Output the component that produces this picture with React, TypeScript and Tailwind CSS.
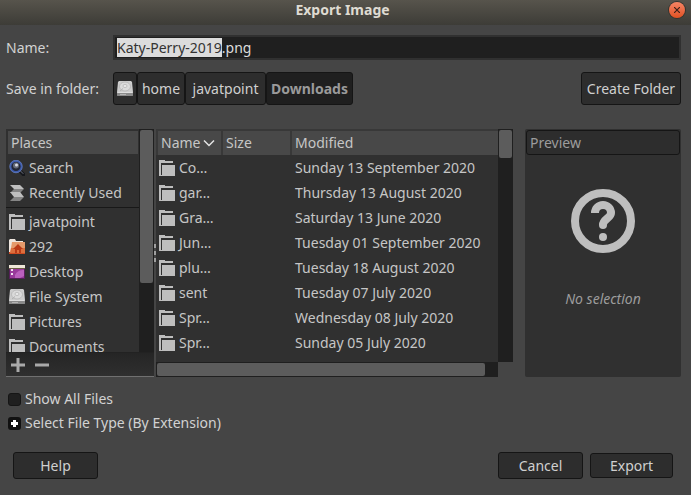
import { useEffect, useRef, useState } from "react";
import type { ReactNode } from "react";

const FILE_NAME = "Katy-Perry-2019.png";

function FolderIcon() {
  return (
    <svg width="16" height="16" viewBox="0 0 16 16" className="shrink-0" shapeRendering="crispEdges" aria-hidden="true">
      <path d="M0 0h6v1h8v2H2v12h14v1H0z" fill="#bebebe" />
      <path d="M3 5h13v11H3z" fill="#bebebe" />
    </svg>
  );
}

function DriveIcon() {
  return (
    <svg width="16" height="16" viewBox="0 0 16 16" className="shrink-0" aria-hidden="true">
      <path d="M2 0h12l1 1 1 10v3l-1 1H1l-1-1v-3L1 1z" fill="#cdcdcd" />
      <path d="M0 12h16v2l-1 1H1l-1-1z" fill="#8a8a8a" />
      <path d="M1 11h14v1H1z" fill="#dedede" />
      <ellipse cx="8" cy="5.500" rx="5.500" ry="4.500" fill="#dadada" stroke="#b2b2b2" strokeWidth="0.8" />
      <ellipse cx="8" cy="5" rx="2" ry="1.600" fill="#e8e8e8" stroke="#b0b0b0" strokeWidth="0.7" />
      <path d="M3 10l3-2.500" stroke="#b0b0b0" />
      <path d="M3 13.500h6" stroke="#b4b4b4" />
    </svg>
  );
}

function SearchIcon() {
  return (
    <svg width="16" height="16" viewBox="0 0 16 16" className="shrink-0" aria-hidden="true">
      <path d="M11 11l3.500 3.500" stroke="#15171c" strokeWidth="3.500" strokeLinecap="round" />
      <path d="M11.500 11l2.500 2.500" stroke="#6f7480" strokeWidth="1" strokeLinecap="round" />
      <circle cx="7" cy="6.500" r="5.500" fill="#232735" stroke="#3d5bac" strokeWidth="1.800" />
      <circle cx="7" cy="6.500" r="6.300" fill="none" stroke="#7189c8" strokeWidth="0.600" />
      <circle cx="7" cy="5.500" r="3" fill="#656a78" />
      <circle cx="7.500" cy="5" r="1.500" fill="#d8dbe4" />
    </svg>
  );
}

function RecentIcon() {
  return (
    <svg width="16" height="16" viewBox="0 0 16 16" className="shrink-0" aria-hidden="true">
      <path d="M1 0h10l4 4H5z" fill="#bfbfbf" />
      <path d="M5 4h10l-4 4H1z" fill="#858585" />
      <path d="M1 7h10l4 5H5z" fill="#bfbfbf" />
      <path d="M5 12h10l-4 4H1z" fill="#858585" />
    </svg>
  );
}

function HomeFolderIcon() {
  return (
    <svg width="16" height="16" viewBox="0 0 16 16" className="shrink-0" aria-hidden="true">
      <path d="M0 1h6l1 2h8v12H0z" fill="#c4431f" />
      <path d="M1 0h5l1 2h7v3H3v8H0V1z" fill="#eee6df" />
      <path d="M3 3h13v11l-1 1H1z" fill="#e59a6b" />
      <path d="M2 9h14v5H1z" fill="#dc6f3d" />
      <path d="M9 5l5 5h-2v4h-2v-3H8v3H6v-4H4z" fill="#b93a18" />
      <path d="M0 14h16v1H0z" fill="#cf4a20" />
    </svg>
  );
}

function DesktopIcon() {
  return (
    <svg width="16" height="14" viewBox="0 0 16 14" className="shrink-0" aria-hidden="true">
      <path d="M0 0h16v14H0z" fill="#57205a" />
      <path d="M0 0h16v3H0z" fill="#efe7d8" />
      <path d="M0 3h16v1H0z" fill="#6c5c43" />
      <path d="M1 4h14v9H1z" fill="#993a9b" />
      <path d="M6 10c2-4 5-5 9-5v6l-4 2H6z" fill="#bb60be" />
      <path d="M2 4h2v2H2zM2 8h2v2H2z" fill="#f0e4f1" />
    </svg>
  );
}

const places: { name: string; icon: ReactNode }[] = [
  { name: "javatpoint", icon: <FolderIcon /> },
  { name: "292", icon: <HomeFolderIcon /> },
  { name: "Desktop", icon: <DesktopIcon /> },
  { name: "File System", icon: <DriveIcon /> },
  { name: "Pictures", icon: <FolderIcon /> },
  { name: "Documents", icon: <FolderIcon /> },
];

const files = [
  ["Co…", "Sunday 13 September 2020"],
  ["gar…", "Thursday 13 August 2020"],
  ["Gra…", "Saturday 13 June 2020"],
  ["Jun…", "Tuesday 01 September 2020"],
  ["plu…", "Tuesday 18 August 2020"],
  ["sent", "Tuesday 07 July 2020"],
  ["Spr…", "Wednesday 08 July 2020"],
  ["Spr…", "Sunday 05 July 2020"],
];

const button = "rounded-[3px] border border-[#151515] bg-[#2d2d2d] text-[#d0d0d0]";

function Place({ name, icon }: { name: string; icon: ReactNode }) {
  return (
    <li>
      <button type="button" className="flex h-[25px] w-full items-center gap-1 pl-[3px] text-left">
        {icon}
        {name}
      </button>
    </li>
  );
}

export default function App() {
  const nameRef = useRef<HTMLInputElement>(null);
  const [name, setName] = useState(FILE_NAME);
  const [showAll, setShowAll] = useState(false);

  // Preselect the base name so typing keeps the extension.
  useEffect(() => {
    nameRef.current?.focus();
    nameRef.current?.setSelectionRange(0, FILE_NAME.lastIndexOf("."));
  }, []);

  return (
    <main className="flex min-h-screen flex-col bg-[#454545] font-['Noto_Sans',sans-serif] text-[14px] leading-5 text-[#c6c6c6]">
      <header className="grid h-[25px] grid-cols-[1fr_auto_1fr] items-center bg-linear-to-b from-[#57544c] to-[#3d3c37] pr-[6px] pb-[5px]">
        <h1 className="col-start-2 font-bold text-[#dfdbd2]">Export Image</h1>
        <button
          type="button"
          aria-label="Close"
          className="flex size-4 items-center justify-center justify-self-end rounded-full bg-linear-to-b from-[#f58464] to-[#e0501f] ring-1 ring-[#35332e]"
        >
          <svg width="6" height="6" viewBox="0 0 6 6" aria-hidden="true">
            <path d="M0 0l6 6M6 0L0 6" stroke="#3c2018" strokeWidth="1.2" />
          </svg>
        </button>
      </header>

      <div className="flex items-center pt-[10px] pr-[10px] pl-[6px]">
        <label htmlFor="file-name" className="w-[107px] shrink-0 text-[#d2d2d2]">
          Name:
        </label>
        <input
          id="file-name"
          ref={nameRef}
          value={name}
          onChange={(e) => setName(e.target.value)}
          spellCheck={false}
          className="h-[25px] min-w-0 flex-1 border-2 border-[#303030] bg-[#1f1f1f] px-[2px] text-[#dcdcdc] outline-none selection:bg-[#dcdcdc] selection:text-[#333333]"
        />
      </div>

      <div className="flex items-center pt-3 pr-[10px] pl-[6px] text-[#d2d2d2]">
        <span className="w-[107px] shrink-0">Save in folder:</span>
        <nav aria-label="Folder path" className="flex">
          <button type="button" aria-label="File System root" className={`${button} flex h-[33px] w-6 items-center justify-center`}>
            <DriveIcon />
          </button>
          <button type="button" className={`${button} h-[33px] w-12`}>home</button>
          <button type="button" className={`${button} h-[33px] w-[81px]`}>javatpoint</button>
          <button type="button" aria-current="page" className="h-[33px] w-[87px] rounded-[3px] border border-[#151515] bg-[#1f1f1f] font-bold text-[#9a9a9a]">
            Downloads
          </button>
        </nav>
        <button type="button" className={`${button} ml-auto h-[33px] w-[100px]`}>Create Folder</button>
      </div>

      <div className="flex h-[272px] pt-6 pr-[10px] pl-[6px]">
        <section aria-label="Places" className="flex w-[148px] shrink-0 flex-col border-b border-[#707070] bg-[#303030]">
          <div className="flex min-h-0 flex-1">
            <div className="min-w-0 flex-1 overflow-hidden">
              <h2 className="m-px mt-[2px] ml-[2px] h-[23px] bg-[#484848] pl-[3px] leading-6">Places</h2>
              <ul className="border-b border-[#181818] pb-[2px]">
                <Place name="Search" icon={<SearchIcon />} />
                <Place name="Recently Used" icon={<RecentIcon />} />
              </ul>
              <ul className="pt-px">
                {places.map((p) => (
                  <Place key={p.name} {...p} />
                ))}
              </ul>
            </div>
            <div className="w-[15px] bg-[#1f1f1f] p-px">
              <div className="h-[153px] rounded-[2px] bg-[#5c5c5c]" />
            </div>
          </div>
          <div className="flex h-6 items-center gap-[10px] border-t border-[#222222] bg-linear-to-b from-[#252525] to-[#2f2f2f] pl-[5px]">
            <button type="button" aria-label="Add bookmark">
              <svg width="14" height="14" viewBox="0 0 14 14" aria-hidden="true">
                <path d="M5.500 0h3v5.500H14v3H8.500V14h-3V8.500H0v-3h5.500z" fill="#a9a9a9" />
              </svg>
            </button>
            <button type="button" aria-label="Remove bookmark">
              <svg width="14" height="14" viewBox="0 0 14 14" aria-hidden="true">
                <path d="M0 5.500h14v3H0z" fill="#a9a9a9" />
              </svg>
            </button>
          </div>
        </section>

        <div className="flex w-[2px] shrink-0 flex-col justify-center gap-[3px]" role="separator" aria-orientation="vertical">
          <span className="h-1 bg-[#a0a0a0]" />
          <span className="h-1 bg-[#a0a0a0]" />
          <span className="h-1 bg-[#a0a0a0]" />
        </div>

        <section aria-label="Files" className="flex min-w-0 flex-1 flex-col">
          <div className="flex min-h-0 flex-1">
            <div className="min-w-0 flex-1 overflow-hidden bg-[#303030]">
              <table className="w-full table-fixed border-separate border-spacing-0 text-left">
                <thead>
                  <tr className="h-[26px]">
                    <th className="w-[67px] border-t-2 border-r-2 border-l-2 border-[#383838] bg-[#484848] pl-[3px] font-normal">
                      <button type="button" className="flex items-center gap-[2px]">
                        Name
                        <svg width="14" height="8" viewBox="0 0 14 8" fill="none" className="shrink-0" aria-hidden="true">
                          <path d="M2 1.500l5 5 5-5" stroke="#e4e4e4" strokeWidth="1.500" />
                        </svg>
                      </button>
                    </th>
                    <th className="w-[69px] border-t-2 border-r-2 border-[#383838] bg-[#484848] pl-[3px] font-normal">Size</th>
                    <th className="border-t-2 border-[#383838] bg-[#484848] pl-[3px] font-normal">Modified</th>
                  </tr>
                </thead>
                <tbody>
                  {files.map(([file, modified]) => (
                    <tr key={modified} className="h-[25px]">
                      <td className="pl-[3px]">
                        <span className="flex items-center gap-1 whitespace-nowrap">
                          <FolderIcon />
                          {file}
                        </span>
                      </td>
                      <td />
                      <td className="truncate pl-[3px]">{modified}</td>
                    </tr>
                  ))}
                </tbody>
              </table>
            </div>
            <div className="w-[15px] bg-[#1f1f1f] p-px">
              <div className="h-7 rounded-[2px] bg-[#5c5c5c]" />
            </div>
          </div>
          <div className="mr-[15px] h-[15px] bg-[#1f1f1f] p-px pr-[13px]">
            <div className="h-full rounded-[2px] bg-[#5c5c5c]" />
          </div>
        </section>

        <aside className="ml-3 flex w-[156px] shrink-0 flex-col items-center rounded-[2px] bg-[#303030] p-px text-[#9c9c9c]">
          <button type="button" className="h-[25px] w-full rounded-[3px] border border-[#151515] bg-[#2d2d2d] pl-[3px] text-left">
            Preview
          </button>
          <svg width="64" height="64" viewBox="0 0 64 64" className="mt-[34px]" fill="none" aria-hidden="true">
            <circle cx="32" cy="32" r="28" stroke="#bebebe" strokeWidth="8" />
            <path d="M24 24a8 8 0 0 1 16 0c0 5-8 6-8 12" stroke="#bebebe" strokeWidth="8" />
            <circle cx="32" cy="36" r="4" fill="#bebebe" />
            <circle cx="32" cy="48" r="4" fill="#bebebe" />
          </svg>
          <p className="mt-9 italic">No selection</p>
        </aside>
      </div>

      <div className="flex flex-col items-start gap-1 px-2 pt-3 text-[#d2d2d2]">
        <label className="flex items-center gap-1">
          <input
            type="checkbox"
            checked={showAll}
            onChange={(e) => setShowAll(e.target.checked)}
            className="size-[13px] appearance-none rounded-[3px] border border-[#151515] bg-[#1f1f1f] checked:bg-[#c6c6c6]"
          />
          Show All Files
        </label>
        <button type="button" aria-expanded="false" className="flex items-center gap-1">
          <svg width="13" height="13" viewBox="0 0 13 13" aria-hidden="true">
            <rect width="13" height="13" rx="3" fill="#111111" />
            <path d="M5 3h3v2h2v3H8v2H5V8H3V5h2z" fill="#ffffff" />
          </svg>
          Select File Type (By Extension)
        </button>
      </div>

      <footer className="flex items-center gap-[7px] pt-[19px] pr-[18px] pb-4 pl-[13px]">
        <button type="button" className={`${button} mr-auto h-[27px] w-[85px]`}>Help</button>
        <button type="button" className={`${button} h-[27px] w-[85px]`}>Cancel</button>
        <button type="button" className={`${button} h-[25px] w-[83px]`}>Export</button>
      </footer>
    </main>
  );
}
